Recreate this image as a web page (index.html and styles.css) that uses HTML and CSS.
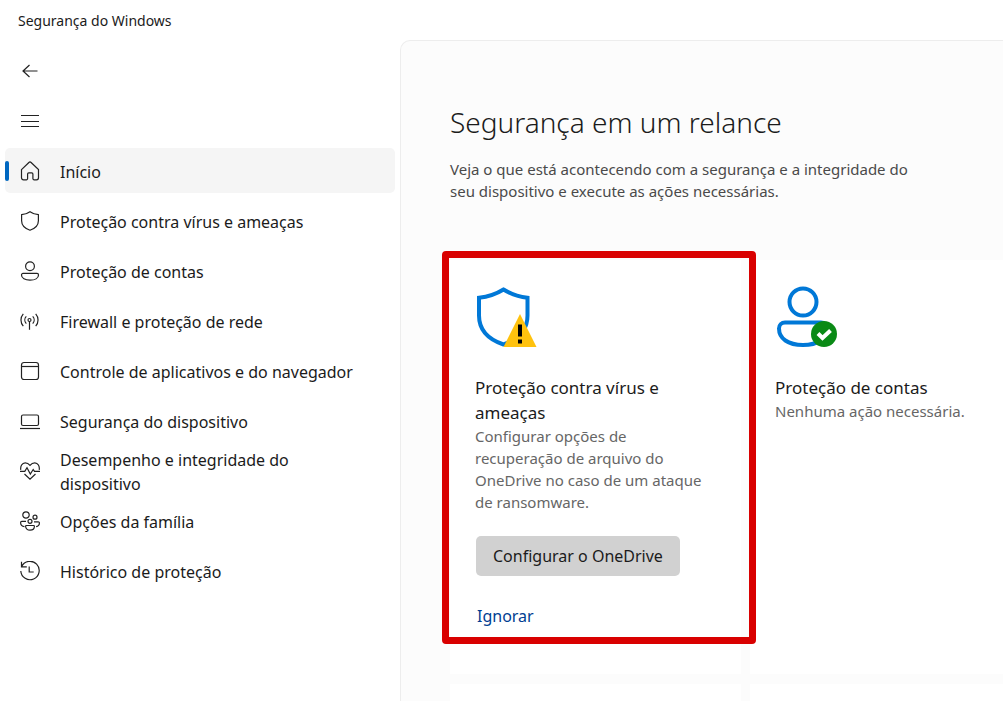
FILE: index.html
```
<!DOCTYPE html>
<html lang="pt-BR">
<head>
  <meta charset="UTF-8">
  <meta name="viewport" content="width=device-width, initial-scale=1.0">
  <title>Segurança do Windows</title>
  <link rel="stylesheet" href="styles.css">
</head>
<body>
  <header class="titlebar">Segurança do Windows</header>

  <div class="container">

    <!-- Sidebar -->
    <div class="sidebar">
      <button type="button" class="icon-button" aria-label="Voltar">
        <svg class="icon" viewBox="0 0 20 20"><path d="M17.500 10H2.800M9.500 4 3 10l6.500 6"/></svg>
      </button>
      <button type="button" class="icon-button" aria-label="Menu">
        <svg class="icon" viewBox="0 0 20 20"><path d="M1 4.500h18M1 10.500h18M1 15.500h18"/></svg>
      </button>

      <nav class="nav">
        <a href="#inicio" class="active">
          <svg class="icon" viewBox="0 0 20 20"><path d="M1.500 8.600 8.900 1.500a1.600 1.600 0 0 1 2.200 0l7.400 7.100v8.200a2 2 0 0 1-2 2h-2.400a1.200 1.200 0 0 1-1.200-1.200v-4.600a1.200 1.200 0 0 0-1.200-1.200H8.800a1.200 1.200 0 0 0-1.200 1.200v4.600a1.200 1.200 0 0 1-1.200 1.200H3.500a2 2 0 0 1-2-2z"/></svg>
          <span>Início</span>
        </a>
        <a href="#virus">
          <svg class="icon" viewBox="0 0 20 20"><path d="M10 .8c2.500 1.800 5.200 2.700 8.400 2.900v6c0 4.700-3.200 7.700-8.400 9.500-5.200-1.800-8.400-4.800-8.400-9.500v-6C4.800 3.500 7.500 2.600 10 .8z"/></svg>
          <span>Proteção contra vírus e ameaças</span>
        </a>
        <a href="#contas">
          <svg class="icon" viewBox="0 0 20 20"><circle cx="10" cy="5.300" r="4.400"/><path d="M3 12.400h14a1.500 1.500 0 0 1 1.500 1.500c0 3.300-3.600 5.300-8.500 5.300s-8.500-2-8.500-5.300A1.500 1.500 0 0 1 3 12.400z"/></svg>
          <span>Proteção de contas</span>
        </a>
        <a href="#firewall">
          <svg class="icon" viewBox="0 0 20 20"><circle cx="9.500" cy="9" r="1.500"/><path d="M9.500 10.500v8.300M6.300 5.400a5.200 5.200 0 0 0 0 7.200M12.700 5.400a5.200 5.200 0 0 1 0 7.200M3.300 2.800a9.400 9.400 0 0 0 0 12.400M15.700 2.800a9.400 9.400 0 0 1 0 12.400"/></svg>
          <span>Firewall e proteção de rede</span>
        </a>
        <a href="#aplicativos">
          <svg class="icon" viewBox="0 0 20 20"><rect x="1.500" y="1.500" width="17" height="17" rx="2.500"/><path d="M1.500 5.500h17"/></svg>
          <span>Controle de aplicativos e do navegador</span>
        </a>
        <a href="#dispositivo">
          <svg class="icon" viewBox="0 0 20 20"><rect x="1.500" y="4" width="17" height="10.500" rx="1.500"/><path d="M0 17.500h20"/></svg>
          <span>Segurança do dispositivo</span>
        </a>
        <a href="#desempenho">
          <svg class="icon" viewBox="0 0 20 20"><path d="M.8 8.800C.2 5.500 2 1.800 5.200 1.800c2.200 0 3.600 1 4.800 2.500 1.200-1.500 2.600-2.500 4.800-2.500 3.200 0 5 3.700 4.400 7M0 10.300h4.800l2.200-3.500 3.300 6.200 2.900-4.500 1.300 1.800H20M4.500 13l5.500 5.200 5.500-5.200"/></svg>
          <span>Desempenho e integridade do <br>dispositivo</span>
        </a>
        <a href="#familia">
          <svg class="icon" viewBox="0 0 20 20"><circle cx="6" cy="4" r="3.200"/><circle cx="15" cy="6.200" r="2"/><circle cx="10" cy="10.300" r="2"/><path d="M6 10.300H1.800a1.200 1.200 0 0 0-1.200 1.200c0 2.400 1.500 3.900 3.900 4.100M14 10.800h4.200a1.200 1.200 0 0 1 1.200 1.200c0 2-1.200 3.300-3.300 3.600M6.400 14.500h7.200a.8.8 0 0 1 .8.8c0 2.400-1.800 3.900-4.400 3.900s-4.400-1.500-4.400-3.900a.8.800 0 0 1 .8-.8z"/></svg>
          <span>Opções da família</span>
        </a>
        <a href="#historico">
          <svg class="icon" viewBox="0 0 20 20"><path d="M1.500.8v5h5.300M1.700 5.500A9.200 9.200 0 1 1 .8 10M9.200 5.500V11h4.500"/></svg>
          <span>Histórico de proteção</span>
        </a>
      </nav>
    </div>

    <!-- Main Content -->
    <main class="main-content">
      <h1>Segurança em um relance</h1>
      <p class="intro">Veja o que está acontecendo com a segurança e a integridade do seu dispositivo e execute as ações necessárias.</p>

      <div class="cards">
        <div class="card highlighted">
          <svg class="card-icon" viewBox="0 0 62 62">
            <path class="outline" d="M28.500 3.500c7.500 4.700 15 7.300 24 8.200v17.800C52.500 44 43 53.500 28.500 58.500 13.500 53.500 4 44 4 29.500V11.700C13 10.800 21 8.200 28.500 3.500z"/>
            <path class="warning" d="M45 28 61.500 61h-33z"/>
            <path class="mark" d="M43 38.500h4v12h-4zM43 53.500h4v4h-4z"/>
          </svg>
          <h2>Proteção contra vírus e ameaças</h2>
          <p>Configurar opções de recuperação de arquivo do OneDrive no caso de um ataque de ransomware.</p>
          <button type="button" class="action">Configurar o OneDrive</button>
          <a href="#ignorar" class="dismiss">Ignorar</a>
        </div>
        <div class="card">
          <svg class="card-icon" viewBox="0 0 62 62">
            <circle class="outline" cx="28" cy="16" r="13.500"/>
            <path class="outline" d="M10 36.500h36a6 6 0 0 1 6 6C52 52.500 43 59 28 59S4 52.500 4 42.500a6 6 0 0 1 6-6z"/>
            <circle class="ok" cx="49" cy="48" r="13"/>
            <path class="check" d="m43 47.500 4.500 4.500 8-7.500"/>
          </svg>
          <h2>Proteção de contas</h2>
          <p>Nenhuma ação necessária.</p>
        </div>
        <div class="card"></div>
        <div class="card"></div>
      </div>
    </main>
  </div>
</body>
</html>
```
FILE: styles.css
```
/* General styling */
* {
  margin: 0;
  padding: 0;
  box-sizing: border-box;
}

body {
  font-family: "Noto Sans", "Open Sans", sans-serif;
  font-size: 16px;
  line-height: 24px;
  background: #fff;
  color: #1b1b1b;
  display: flex;
  flex-direction: column;
  height: 100vh;
  overflow: hidden;
}

.titlebar {
  height: 40px;
  padding-left: 18px;
  font-size: 14px;
  line-height: 42px;
}

.container {
  display: flex;
  flex: 1;
  min-height: 0;
}

/* Sidebar */
.sidebar {
  flex: 0 0 400px;
  padding: 8px 5px;
  display: flex;
  flex-direction: column;
  gap: 5px;
}

.icon-button {
  width: 50px;
  height: 45px;
  padding-left: 15px;
  border: none;
  background: none;
  text-align: left;
  cursor: pointer;
}

.icon {
  display: block;
  flex: none;
  width: 20px;
  height: 20px;
  fill: none;
  stroke: #222;
  stroke-width: 1.2;
}

.nav {
  display: flex;
  flex-direction: column;
  gap: 5px;
}

.nav a {
  display: flex;
  align-items: center;
  gap: 20px;
  height: 45px;
  padding: 0 15px;
  border-radius: 5px;
  color: inherit;
  text-decoration: none;
}

.nav .active {
  position: relative;
  background: #f5f5f5;
}

.nav .active::before {
  content: "";
  position: absolute;
  left: 0;
  top: 13px;
  width: 4px;
  height: 20px;
  border-radius: 2px;
  background: #0067c0;
}

.nav span {
  flex: 1;
  padding-top: 2px;
}

/* Main content */
.main-content {
  flex: 1;
  min-width: 0;
  overflow: hidden;
  padding: 60px 0 0 49px;
  background: #fcfcfc;
  border: 1px solid #ededed;
  border-width: 1px 0 0 1px;
  border-top-left-radius: 10px;
}

h1 {
  font-size: 28px;
  font-weight: 300;
  line-height: 42px;
}

.intro {
  max-width: 480px;
  margin-top: 15px;
  font-size: 15px;
  line-height: 22px;
  color: #4a4a4a;
}

/* Cards */
.cards {
  display: grid;
  grid-template-columns: repeat(2, 291px);
  grid-auto-rows: 414px;
  gap: 10px 9px;
  margin-top: 58px;
}

.card {
  position: relative;
  padding: 26px 25px;
  background: #fff;
}

/* Red frame drawn around the card that needs attention */
.highlighted::after {
  content: "";
  position: absolute;
  z-index: 1;
  top: -9px;
  left: -8px;
  right: -15px;
  bottom: 30px;
  border: 7px solid #d90000;
  border-radius: 4px;
  pointer-events: none;
}

.card-icon {
  display: block;
  width: 62px;
  height: 62px;
  margin-bottom: 27px;
}

.outline {
  fill: none;
  stroke: #0078d7;
  stroke-width: 4;
}

.warning {
  fill: #ffc20e;
}

.mark {
  fill: #000;
}

.ok {
  fill: #0a8a16;
}

.check {
  fill: none;
  stroke: #fff;
  stroke-width: 4;
}

.card h2 {
  font-size: 17px;
  font-weight: 400;
  line-height: 25px;
}

.card p {
  font-size: 15px;
  line-height: 22px;
  color: #666;
}

.action {
  display: block;
  height: 40px;
  margin: 23px 0 28px 1px;
  padding: 0 17px;
  border: none;
  border-radius: 5px;
  background: #d1d1d1;
  color: #1b1b1b;
  font: inherit;
  cursor: pointer;
}

.dismiss {
  margin-left: 2px;
  color: #003e92;
  text-decoration: none;
}
```
